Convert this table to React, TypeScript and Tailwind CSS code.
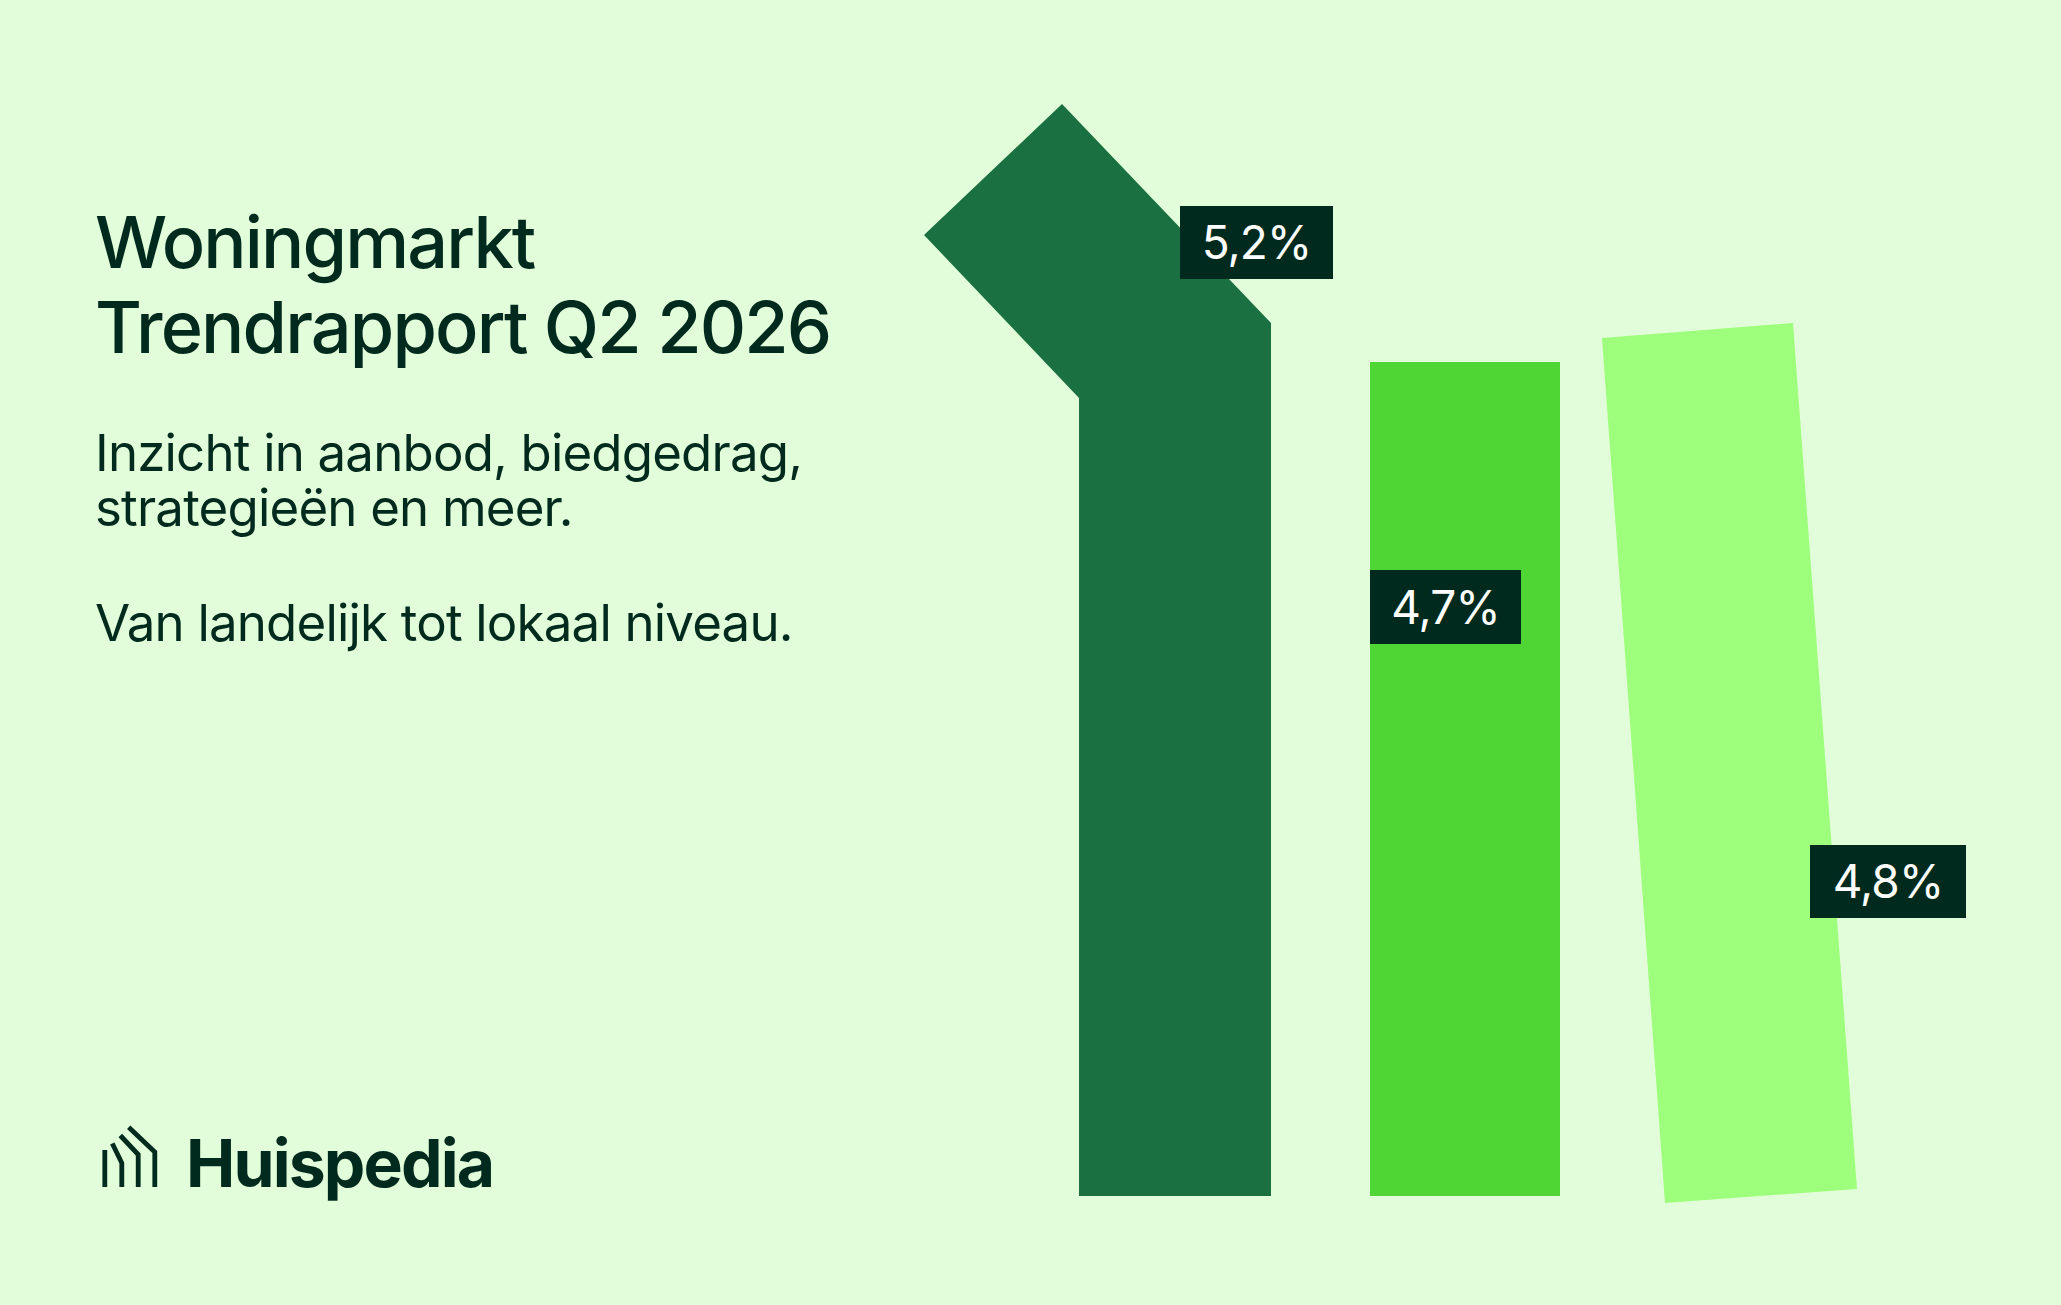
import React from "react";

const ink = "#002a1e";

const Label = ({ text, className }: { text: string; className: string }) => (
  <div
    className={`absolute flex items-center justify-center bg-[#002a1e] text-white text-[46px] font-normal tracking-[-0.02em] ${className}`}
    style={{ fontFamily: "Inter, 'Noto Sans', sans-serif" }}
  >
    {text}
  </div>
);

const Logo = () => (
  <div className="flex items-end">
    <svg width="60" height="71" viewBox="100 1125 60 71" className="shrink-0">
      <g fill="none" stroke={ink} strokeWidth="4.8" strokeLinejoin="miter" strokeLinecap="butt">
        <path d="M104.8 1150 V1187" />
        <path d="M112.3 1143.5 L121.8 1163 V1187" />
        <path d="M120.3 1135.5 L138.2 1154.5 V1187" />
        <path d="M128.7 1127.3 L154.8 1152 V1187" />
      </g>
    </svg>
    <span
      className="ml-[26px] text-[66px] leading-[66px] font-bold tracking-[-0.028em] text-[#002a1e]"
      style={{ fontFamily: "Inter, 'Noto Sans', sans-serif" }}
    >
      Huispedia
    </span>
  </div>
);

const Chart = () => (
  <div className="relative flex-1 h-full">
    <svg width="1161" height="1305" viewBox="900 0 1161 1305" className="absolute inset-0">
      <polygon
        points="1062,104 1271,323 1271,1196 1079,1196 1079,398 924,235"
        fill="#1a7040"
      />
      <rect x="1370" y="362" width="190" height="834" fill="#4fd634" />
      <polygon points="1602,338 1793,323 1857,1189 1665,1203" fill="#9eff7c" />
    </svg>
    <Label text="5,2%" className="left-[280px] top-[206px] w-[153px] h-[73px]" />
    <Label text="4,7%" className="left-[470px] top-[570px] w-[151px] h-[74px]" />
    <Label text="4,8%" className="left-[910px] top-[845px] w-[156px] h-[73px]" />
  </div>
);

export default function App() {
  return (
    <div
      className="w-[2061px] h-[1305px] bg-[#e2fdd9] flex overflow-hidden text-[#002a1e]"
      style={{ fontFamily: "Inter, 'Noto Sans', sans-serif" }}
    >
      <div className="w-[900px] h-full flex flex-col pl-[95px] pt-[199px] pb-[109px]">
        <h1 className="text-[72px] leading-[85px] font-medium tracking-[-0.026em]">
          Woningmarkt
          <br />
          Trendrapport Q2 2026
        </h1>
        <p className="mt-[56px] text-[51px] leading-[55px] font-normal tracking-[-0.016em]">
          Inzicht in aanbod, biedgedrag,
          <br />
          strategieën en meer.
        </p>
        <p className="mt-[60px] text-[51px] leading-[55px] font-normal tracking-[-0.016em]">
          Van landelijk tot lokaal niveau.
        </p>
        <div className="mt-auto ml-[5px]">
          <Logo />
        </div>
      </div>
      <Chart />
    </div>
  );
}
